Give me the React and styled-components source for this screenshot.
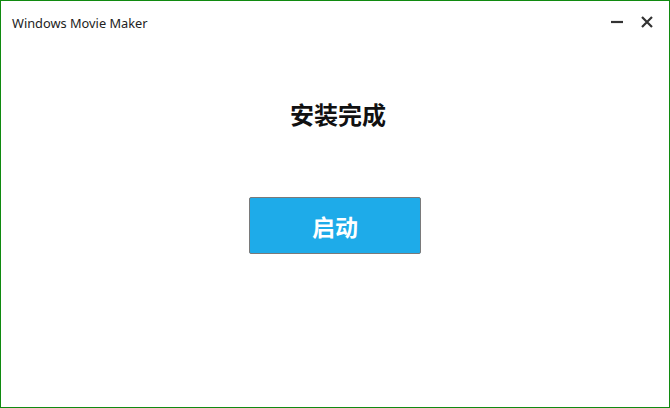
import React from 'react';
import styled, { createGlobalStyle } from 'styled-components';

const GlobalStyle = createGlobalStyle`
    html, body {
        margin: 0;
        padding: 0;
        background: #ffffff;
    }
    body {
        font-family: 'Noto Sans', 'Noto Sans CJK SC', sans-serif;
    }
`;

const App = () => {
    return (
        <>
            <GlobalStyle />
            <StyledWindow>
                <StyledTitleBar>
                    <span className="title">Windows Movie Maker</span>
                    <StyledControls>
                        <StyledControlButton type="button" aria-label="minimize">
                            <svg width="14" height="14" viewBox="0 0 14 14">
                                <path d="M1 7h12" stroke="#333" strokeWidth="2.2" />
                            </svg>
                        </StyledControlButton>
                        <StyledControlButton type="button" aria-label="close">
                            <svg width="14" height="14" viewBox="0 0 14 14">
                                <path
                                    d="M2 2l10 10M12 2L2 12"
                                    stroke="#333"
                                    strokeWidth="2.2"
                                />
                            </svg>
                        </StyledControlButton>
                    </StyledControls>
                </StyledTitleBar>

                <StyledBody>
                    <StyledHeading>安装完成</StyledHeading>
                    <StyledLaunchButton type="button">启动</StyledLaunchButton>
                </StyledBody>
            </StyledWindow>
        </>
    );
};

export default App;
/*--------------------------------------
------------Styled Components-----------
--------------------------------------*/
const StyledWindow = styled.div`
    box-sizing: border-box;
    width: 670px;
    height: 408px;
    border: 1px solid #108a10;
    background: #fff;
    display: flex;
    flex-direction: column;
`;

const StyledTitleBar = styled.div`
    height: 42px;
    display: flex;
    align-items: center;
    justify-content: space-between;
    padding: 0 11px 0 11px;

    .title {
        font-family: 'Noto Sans', 'Noto Sans CJK SC', sans-serif;
        font-size: 12.8px;
        color: #222;
        margin-top: 1px;
    }
`;

const StyledControls = styled.div`
    display: flex;
    align-items: center;
    gap: 8px;
`;

const StyledControlButton = styled.button`
    width: 22px;
    height: 22px;
    padding: 0;
    border: none;
    background: transparent;
    display: flex;
    align-items: center;
    justify-content: center;
    cursor: pointer;
`;

const StyledBody = styled.div`
    flex: 1;
    display: flex;
    flex-direction: column;
    align-items: center;
    padding-top: 54px;
`;

const StyledHeading = styled.h1`
    margin: 0 0 0 6px;
    font-family: 'Noto Sans CJK SC', sans-serif;
    font-size: 24px;
    font-weight: 700;
    line-height: 34px;
    color: #111;
`;

const StyledLaunchButton = styled.button`
    margin-top: 66px;
    box-sizing: border-box;
    width: 172px;
    height: 57px;
    border: 1px solid #7a7a7a;
    border-radius: 2px;
    background: #1eabe9;
    color: #fff;
    font-family: 'Noto Sans CJK SC', sans-serif;
    font-size: 23px;
    font-weight: 700;
    cursor: pointer;
`;
